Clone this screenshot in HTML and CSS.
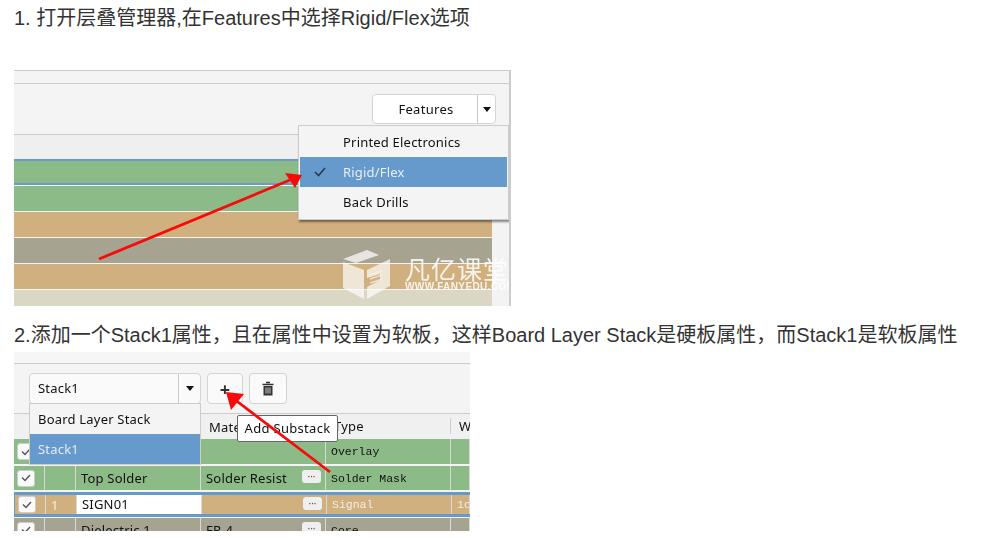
FILE: index.html
```html
<!DOCTYPE html>
<html lang="zh">
<head>
    <meta charset="UTF-8">
    <meta name="viewport" content="width=device-width, initial-scale=1.0">
    <title>Rigid/Flex</title>
    <link rel="stylesheet" href="styles.css">
</head>
<body>

    <p class="step step-one">1. 打开层叠管理器,在Features中选择Rigid/Flex选项</p>

    <div class="shot shot-one">
        <div class="strip"></div>
        <div class="toolbar toolbar-end">
            <div class="features-btn">
                <span class="features-label">Features</span>
                <span class="caret-box"><i class="caret"></i></span>
            </div>
        </div>
        <div class="layers">
            <div class="layer-main">
                <div class="head-band"></div>
                <div class="band band-green band-selected"></div>
                <div class="band band-green"></div>
                <div class="band band-tan"></div>
                <div class="band band-gray"></div>
                <div class="band band-tan"></div>
                <div class="band band-beige"></div>
            </div>
            <div class="layer-side"></div>
        </div>

        <div class="watermark">
            <svg class="wm-logo" width="48" height="49" viewBox="0 0 48 49">
                <path d="M0 9 L24 0 L36 5 L13 13 Z" fill="#fff" opacity=".85"/>
                <path d="M0 12 L21 20 L21 49 L0 38 Z" fill="#fff" opacity=".8"/>
                <path d="M24 20 L47 9 L47 36 L24 49 L24 37 L37 30 L37 24 L24 28 Z" fill="#fff" opacity=".8"/>
                <path d="M27 25 L39 21 M27 29 L39 25 M27 33 L39 29" stroke="#fff" stroke-width="1.5" opacity=".7"/>
            </svg>
            <div>
                <div class="wm-title">凡亿课堂</div>
                <div class="wm-url">WWW.FANYEDU.COM</div>
            </div>
        </div>

        <div class="menu">
            <div class="menu-item">Printed Electronics</div>
            <div class="menu-item is-active">
                <svg class="tick" width="12" height="10" viewBox="0 0 12 10"><path d="M1 5 L4.5 8.5 L11 1" fill="none" stroke="#2c3a4c" stroke-width="1.6"/></svg>
                Rigid/Flex
            </div>
            <div class="menu-item">Back Drills</div>
        </div>

        <svg class="arrow" width="497" height="236" viewBox="0 0 497 236">
            <path d="M85 189 L276 110" stroke="#f60a0a" stroke-width="2.8" fill="none"/>
            <path d="M288 105 L271 103 L281 118 Z" fill="#f60a0a"/>
        </svg>
    </div>

    <p class="step step-two">2.添加一个Stack1属性，且在属性中设置为软板，这样Board Layer Stack是硬板属性，而Stack1是软板属性</p>

    <div class="shot shot-two">
        <div class="strip strip-plain"></div>
        <div class="toolbar">
            <div class="combo">
                <span class="combo-label">Stack1</span>
                <span class="caret-box"><i class="caret"></i></span>
            </div>
            <div class="tool-btn tool-add">+</div>
            <div class="tool-btn tool-trash">
                <svg width="12" height="15" viewBox="0 0 12 15">
                    <path d="M4 1.5h4M0.5 3.5h11" stroke="#333" stroke-width="1.6" fill="none"/>
                    <path d="M1.5 5h9v9.5h-9z" fill="#333"/>
                    <path d="M4 6.5v6M6 6.5v6M8 6.5v6" stroke="#f3f3f3" stroke-width=".8"/>
                </svg>
            </div>
        </div>

        <div class="grid-row grid-head">
            <div class="cell"></div>
            <div class="cell"></div>
            <div class="cell"></div>
            <div class="cell">Material</div>
            <div class="cell cell-rule">Type</div>
            <div class="cell cell-rule">Width</div>
        </div>
        <div class="grid-row row-green row-first">
            <div class="cell cell-check"><span class="check"><svg width="10" height="8" viewBox="0 0 10 8"><path d="M1 3.5 L4 6.5 L9 1" fill="none" stroke="#555" stroke-width="1.4"/></svg></span></div>
            <div class="cell"></div>
            <div class="cell"></div>
            <div class="cell"></div>
            <div class="cell cell-mono">Overlay</div>
            <div class="cell"></div>
        </div>
        <div class="grid-row row-green">
            <div class="cell cell-check"><span class="check"><svg width="10" height="8" viewBox="0 0 10 8"><path d="M1 3.5 L4 6.5 L9 1" fill="none" stroke="#555" stroke-width="1.4"/></svg></span></div>
            <div class="cell"></div>
            <div class="cell">Top Solder</div>
            <div class="cell cell-material">Solder Resist<span class="dots">···</span></div>
            <div class="cell cell-mono">Solder Mask</div>
            <div class="cell"></div>
        </div>
        <div class="grid-row row-tan row-selected">
            <div class="cell cell-check"><span class="check"><svg width="10" height="8" viewBox="0 0 10 8"><path d="M1 3.5 L4 6.5 L9 1" fill="none" stroke="#555" stroke-width="1.4"/></svg></span></div>
            <div class="cell cell-light">1</div>
            <div class="cell cell-edit">SIGN01</div>
            <div class="cell cell-material"><span class="dots">···</span></div>
            <div class="cell cell-mono cell-light">Signal</div>
            <div class="cell cell-mono cell-light">1oz</div>
        </div>
        <div class="grid-row row-gray">
            <div class="cell cell-check"><span class="check"><svg width="10" height="8" viewBox="0 0 10 8"><path d="M1 3.5 L4 6.5 L9 1" fill="none" stroke="#555" stroke-width="1.4"/></svg></span></div>
            <div class="cell"></div>
            <div class="cell">Dielectric 1</div>
            <div class="cell cell-material">FR-4<span class="dots">···</span></div>
            <div class="cell cell-mono">Core</div>
            <div class="cell"></div>
        </div>

        <div class="dropdown">
            <div class="dropdown-item">Board Layer Stack</div>
            <div class="dropdown-item is-active">Stack1</div>
        </div>
        <div class="tooltip">Add Substack</div>

        <svg class="arrow" width="456" height="179" viewBox="0 0 456 179">
            <path d="M316 120 L220 47" stroke="#f60a0a" stroke-width="2.8" fill="none"/>
            <path d="M212 40 L230 42 L217 58 Z" fill="#f60a0a"/>
        </svg>
    </div>

</body>
</html>
```

FILE: styles.css
```css
body {
    font-family: "Liberation Sans", "Noto Sans CJK SC", sans-serif;
    background: #fff;
    color: #333;
    margin: 0;
    padding: 7px 0 0 14px;
}

.step {
    font-size: 20px;
    line-height: 22px;
    margin: 0;
    white-space: nowrap;
}

.step-one {
    margin-bottom: 41px;
}

.step-two {
    margin-top: 18px;
    margin-bottom: 6px;
}

/* the two pasted screenshots */
.shot {
    position: relative;
    overflow: hidden;
    background: #f4f4f4;
    font-family: "Noto Sans", sans-serif;
    font-size: 13px;
    color: #111;
    filter: blur(.3px);
}

.shot-one {
    width: 497px;
    height: 236px;
    box-sizing: border-box;
    border-right: 2px solid #ccc;
}

.shot-two {
    width: 456px;
    height: 179px;
}

.strip {
    height: 12px;
    border-top: 1px solid #ccc;
    border-bottom: 1px solid #ccc;
}

.strip-plain {
    height: 11px;
    border-top: 0;
    background: #f6f6f6;
}

.toolbar {
    height: 49px;
    display: flex;
    align-items: flex-start;
    box-sizing: border-box;
    padding: 9px 0 0 15px;
    gap: 6px;
}

.toolbar-end {
    justify-content: flex-end;
    height: 50px;
    padding: 10px 13px 0 0;
}

.features-btn, .combo, .tool-btn {
    height: 31px;
    box-sizing: border-box;
    display: flex;
    align-items: center;
    background: #fafafa;
    border: 1px solid #d4d4d4;
    border-radius: 4px;
}

.features-btn {
    width: 124px;
    height: 30px;
    background: #fff;
}

.features-label {
    flex: 1;
    text-align: center;
    letter-spacing: .3px;
    padding-left: 2px;
}

.caret-box {
    width: 18px;
    height: 100%;
    display: flex;
    align-items: center;
    justify-content: center;
    border-left: 1px solid #c8c8c8;
    box-sizing: border-box;
}

.caret {
    width: 0;
    height: 0;
    border: 4.5px solid transparent;
    border-top: 5px solid #111;
    border-bottom: 0;
}

.layers {
    display: flex;
}

.layer-main {
    width: 478px;
}

.layer-side {
    flex: 1;
    margin-top: 25px;
    height: 147px;
    background: #f3f3f3;
}

.head-band {
    height: 25px;
    background: #efefef;
    border-top: 1px solid #ccc;
    box-sizing: border-box;
}

.band {
    height: 25px;
    margin-bottom: 1px;
}

.band-selected {
    height: 22px;
    border-top: 2px solid #6b9ac8;
    border-bottom: 2px solid #6b9ac8;
    margin-bottom: 1px;
}

.band-green {
    background: #8dbb88;
}

.band-tan {
    background: #d1b07f;
}

.band-gray {
    background: #a6a391;
}

.band-beige {
    background: #dad8c5;
    margin: 0;
}

.menu {
    position: absolute;
    left: 284px;
    top: 55px;
    width: 211px;
    box-sizing: border-box;
    padding: 1px 1px 2px;
    height: 95px;
    background: #f4f4f4;
    border: 1px solid #ccc;
    box-shadow: 1px 2px 2px rgba(0, 0, 0, .45);
}

.menu-item {
    position: relative;
    height: 30px;
    line-height: 30px;
    padding-left: 43px;
    letter-spacing: .2px;
}

.menu-item.is-active {
    background: #6699cc;
    color: #e8eef6;
}

.tick {
    position: absolute;
    left: 14px;
    top: 10px;
}

.watermark {
    position: absolute;
    left: 329px;
    top: 180px;
    display: flex;
    gap: 14px;
    color: #fff;
    opacity: .85;
    white-space: nowrap;
}

.wm-title {
    font-family: "Noto Sans CJK SC", sans-serif;
    font-size: 25px;
    line-height: 28px;
    margin-top: 4px;
    letter-spacing: 1px;
}

.wm-url {
    font-family: "Liberation Sans", sans-serif;
    font-size: 10px;
    font-weight: bold;
    line-height: 10px;
    letter-spacing: .4px;
}

.arrow {
    position: absolute;
    left: 0;
    top: 0;
}

.combo {
    width: 172px;
}

.combo-label {
    flex: 1;
    padding: 0 0 2px 8px;
    letter-spacing: .2px;
}

.combo .caret-box {
    width: 22px;
}

.tool-btn {
    justify-content: center;
}

.tool-add {
    width: 36px;
    font-size: 18px;
    font-weight: bold;
    color: #333;
}

.tool-trash {
    width: 38px;
}

.grid-row {
    display: grid;
    grid-template-columns: 31px 31px 125px 125px 125px 1fr;
    height: 24px;
    box-sizing: border-box;
    margin-bottom: 2px;
}

.grid-head {
    height: 26px;
    margin-bottom: 0;
    background: #f0f0f0;
    border-top: 1px solid #ccc;
    color: #111;
}

.row-first {
    height: 25px;
}

.cell {
    display: flex;
    align-items: center;
    padding-left: 5px;
    box-sizing: border-box;
    border-right: 1px solid #d9d9d9;
    white-space: nowrap;
    overflow: hidden;
    letter-spacing: .2px;
}

.grid-head .cell {
    border-right: 0;
    padding-left: 8px;
}

.grid-head .cell-rule {
    border-left: 1px solid #ccc;
    height: 16px;
    margin-top: 4px;
    padding-left: 8px;
    margin-left: -1px;
}

.row-green {
    background: #8dbb88;
}

.row-tan {
    background: #d1b07f;
}

.row-gray {
    background: #a6a391;
}

.row-selected {
    height: 25px;
    border-top: 3px solid #6699cc;
    border-bottom: 3px solid #6699cc;
    border-left: 1px solid #6699cc;
    margin-bottom: 1px;
}

.cell-check {
    padding-left: 3px;
}

.check {
    width: 18px;
    height: 17px;
    display: flex;
    align-items: center;
    justify-content: center;
    flex-shrink: 0;
    background: #fafafa;
    border: 1px solid #ccc;
    border-radius: 3px;
    box-sizing: border-box;
}

.cell-mono {
    font-family: "Liberation Mono", monospace;
    font-size: 11.5px;
    letter-spacing: 0;
}

.cell-light {
    color: #f2eee4;
}

.cell-edit {
    background: #fff;
    color: #111;
    padding-bottom: 2px;
}

.cell-material {
    position: relative;
}

.dots {
    position: absolute;
    right: 4px;
    top: 4px;
    width: 19px;
    height: 13px;
    line-height: 12px;
    text-align: center;
    font-size: 10px;
    letter-spacing: 0;
    background: #efefef;
    border-radius: 3px;
    color: #555;
}

.row-selected .dots {
    top: 2px;
}

.dropdown {
    position: absolute;
    left: 15px;
    top: 51px;
    width: 172px;
    height: 62px;
    box-sizing: border-box;
    background: #f4f4f4;
    border: 1px solid #ccc;
}

.dropdown-item {
    height: 30px;
    line-height: 30px;
    padding-left: 8px;
    letter-spacing: .2px;
}

.dropdown-item.is-active {
    background: #6699cc;
    color: #e3ebf5;
}

.tooltip {
    position: absolute;
    left: 223px;
    top: 63px;
    width: 101px;
    height: 27px;
    box-sizing: border-box;
    line-height: 25px;
    text-align: center;
    background: #fff;
    border: 1px solid #666;
    border-radius: 2px;
    letter-spacing: .3px;
    white-space: nowrap;
}
```
